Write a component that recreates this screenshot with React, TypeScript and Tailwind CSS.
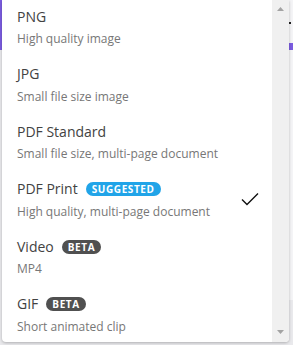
const formats = [
  { title: "PNG", subtitle: "High quality image" },
  { title: "JPG", subtitle: "Small file size image" },
  { title: "PDF Standard", subtitle: "Small file size, multi-page document" },
  { title: "PDF Print", subtitle: "High quality, multi-page document", badge: "suggested", selected: true },
  { title: "Video", subtitle: "MP4", badge: "beta" },
  { title: "GIF", subtitle: "Short animated clip", badge: "beta" },
];

function Badge({ kind }: { kind: string }) {
  const color = kind === "suggested" ? "bg-[#21a4e8]" : "bg-[#505050]";
  return (
    <span
      className={`${color} ml-2 inline-flex h-[14px] items-center rounded-full px-[6px] text-[10px] font-bold uppercase leading-none tracking-[0.6px] text-white`}
    >
      {kind}
    </span>
  );
}

export default function App() {
  return (
    <div className="relative h-[345px] w-[293px] overflow-hidden bg-[#e9e9ec] font-['Open_Sans','Liberation_Sans',sans-serif]">
      {/* page behind the menu */}
      <div className="absolute left-0 top-0 h-[50px] w-[2px] bg-[#7b5ce0]" />
      <div className="absolute right-0 top-0 h-[300px] w-[4px] bg-[#f4f4f6]" />
      <div className="absolute right-0 top-[43px] h-[7px] w-[4px] bg-[#7b5ce0]" />
      <div className="absolute right-[2px] top-[22px] h-[2px] w-[2px] bg-[#222]" />

      <div className="absolute left-[2px] top-0 flex h-[342px] w-[287px] overflow-hidden rounded-b-[4px] bg-white shadow-[0_1px_3px_rgba(0,0,0,0.25)]">
        <div className="flex-1">
          {formats.map((f) => (
            <div key={f.title} className="flex h-[57.5px] items-center justify-between pl-[15px] pr-[12px]">
              <div className="self-start pt-[6.5px]">
                <div className="flex h-[20px] items-center text-[14px] leading-[20px] text-[#424242]">
                  {f.title}
                  {f.badge && <Badge kind={f.badge} />}
                </div>
                <div className="mt-[4.5px] text-[12px] leading-[16px] text-[#777]">{f.subtitle}</div>
              </div>
              {f.selected && (
                <svg className="mb-[6px]" width="21" height="16" viewBox="0 0 21 16">
                  <path d="M3 9.5 L8 14.5 L19 3.5" fill="none" stroke="#111" strokeWidth="1.4" />
                </svg>
              )}
            </div>
          ))}
        </div>
        <div className="flex w-[17px] flex-col items-center justify-between bg-[#f0f0f0] pb-[8px] pt-[7px]">
          <svg width="7" height="4" viewBox="0 0 7 4">
            <path d="M3.5 0 L7 4 L0 4 Z" fill="#a3a3a3" />
          </svg>
          <svg width="7" height="4" viewBox="0 0 7 4">
            <path d="M0 0 L7 0 L3.5 4 Z" fill="#a3a3a3" />
          </svg>
        </div>
      </div>
    </div>
  );
}
